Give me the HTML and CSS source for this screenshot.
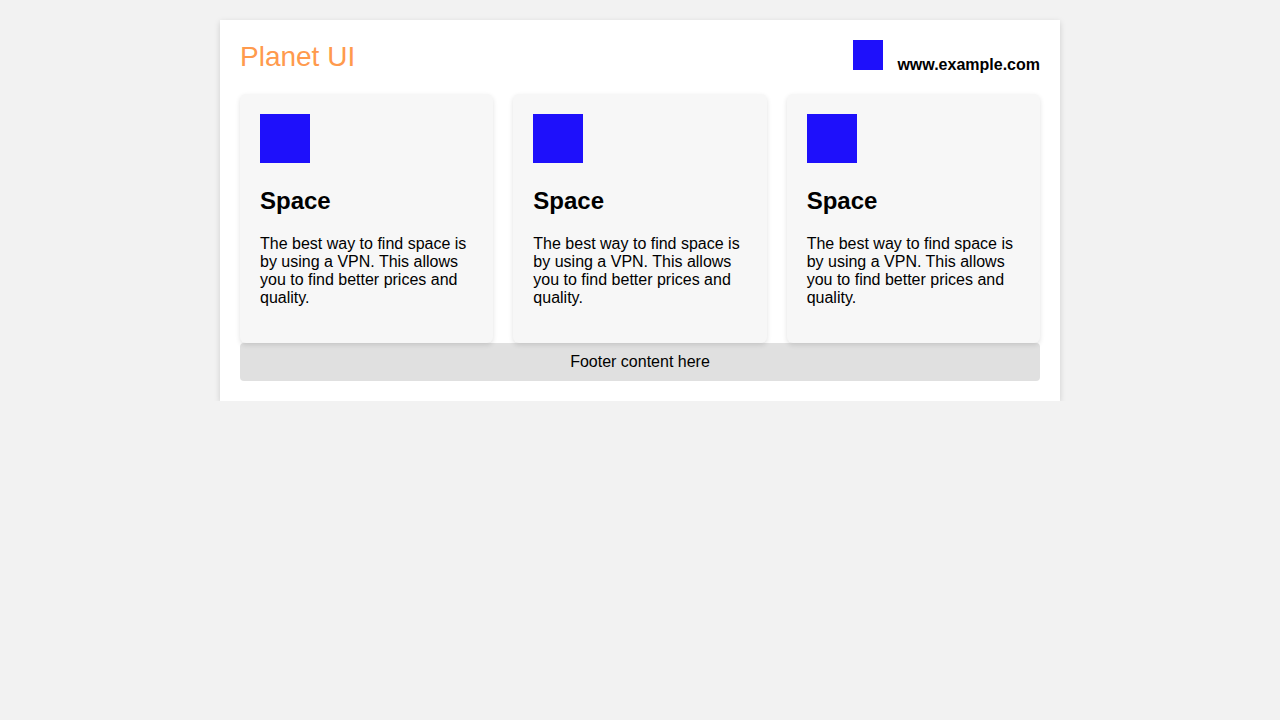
FILE: index.html
```html
<!DOCTYPE html>
<html lang="en">
<head>
<meta charset="utf-8">
<title>Planet UI</title>
<link rel="stylesheet" href="styles.css">
</head>
<body>
<div class="container">
  <header class="header">
    <h1 class="logo">Planet UI</h1>
    <div class="site">
      <span class="site-icon"></span>
      <span class="site-url">www.example.com</span>
    </div>
  </header>
  <main class="cards">
    <div class="card">
      <div class="card-icon"></div>
      <h2 class="card-title">Space</h2>
      <p class="card-text">The best way to find space is by using a VPN. This allows you to find better prices and quality.</p>
    </div>
    <div class="card">
      <div class="card-icon"></div>
      <h2 class="card-title">Space</h2>
      <p class="card-text">The best way to find space is by using a VPN. This allows you to find better prices and quality.</p>
    </div>
    <div class="card">
      <div class="card-icon"></div>
      <h2 class="card-title">Space</h2>
      <p class="card-text">The best way to find space is by using a VPN. This allows you to find better prices and quality.</p>
    </div>
  </main>
  <footer class="footer">Footer content here</footer>
</div>
</body>
</html>
```

FILE: styles.css
```css
html, body {
  margin: 0;
  padding: 0;
}
body {
  background: #f2f2f2;
  font-family: "Liberation Sans", Arial, sans-serif;
  color: #000;
  padding-top: 20px;
}
.container {
  width: 800px;
  margin: 0 auto;
  padding: 20px;
  background: #fff;
  box-shadow: 0 2px 6px rgba(0, 0, 0, 0.15);
}
.header {
  display: flex;
  justify-content: space-between;
  align-items: flex-start;
  margin-bottom: 20px;
}
.logo {
  margin: 0;
  font-size: 28px;
  font-weight: normal;
  line-height: 34px;
  color: #ff9a4d;
}
.site {
  display: flex;
  align-items: flex-end;
  height: 34px;
}
.site-icon {
  display: block;
  width: 30px;
  height: 30px;
  background: #1e10fb;
  align-self: flex-start;
}
.site-url {
  margin-left: 14px;
  font-size: 16px;
  font-weight: bold;
  line-height: 18px;
}
.cards {
  display: grid;
  grid-template-columns: repeat(3, 1fr);
  gap: 20px;
}
.card {
  background: #f7f7f7;
  border-radius: 6px;
  padding: 20px;
  box-shadow: 0 2px 5px rgba(0, 0, 0, 0.12);
}
.card-icon {
  width: 50px;
  height: 49px;
  background: #1e10fb;
}
.card-title {
  margin: 24px 0 0;
  font-size: 24px;
  font-weight: bold;
}
.card-text {
  margin: 20px 0 16px;
  font-size: 16px;
}
.footer {
  background: #e0e0e0;
  border-radius: 4px;
  padding: 10px;
  text-align: center;
  font-size: 16px;
}
```
